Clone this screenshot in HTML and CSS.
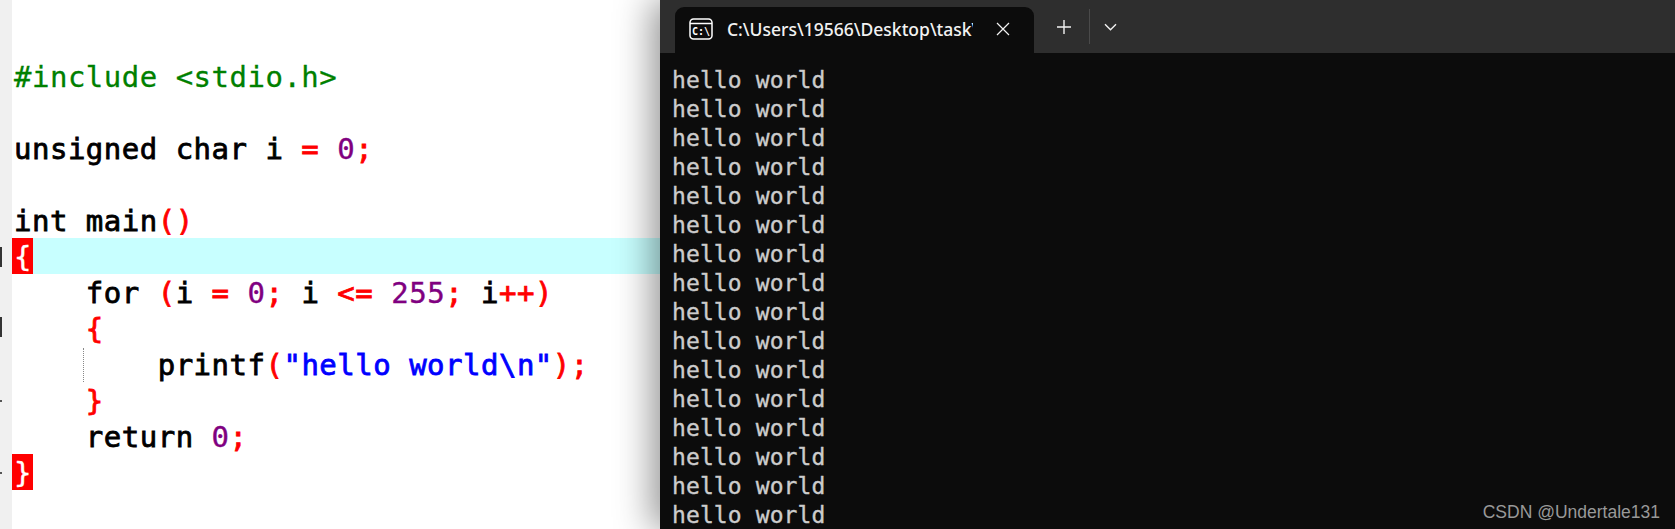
FILE: index.html
```html
<!DOCTYPE html>
<html lang="en">
<head>
<meta charset="utf-8">
<title>hello world</title>
<link rel="stylesheet" href="styles.css">
</head>
<body>
<div class="page">
  <section class="editor">
    <div class="gutter">
      <i class="mark m1"></i><i class="mark m2"></i><i class="tick t1"></i><i class="tick t2"></i>
    </div>
    <div class="code">
      <div class="line pre">#include &lt;stdio.h&gt;</div>
      <div class="line"></div>
      <div class="line"><span class="k">unsigned char i </span><span class="o">=</span> <span class="n">0</span><span class="o">;</span></div>
      <div class="line"></div>
      <div class="line"><span class="k">int main</span><span class="o">()</span></div>
      <div class="line hl"><span class="match">{</span></div>
      <div class="line">    <span class="k">for </span><span class="o">(</span><span class="k">i </span><span class="o">=</span> <span class="n">0</span><span class="o">;</span><span class="k"> i </span><span class="o">&lt;=</span> <span class="n">255</span><span class="o">;</span><span class="k"> i</span><span class="o">++)</span></div>
      <div class="line">    <span class="o">{</span></div>
      <div class="line guide">        <span class="k">printf</span><span class="o">(</span><span class="s">"hello world\n"</span><span class="o">);</span></div>
      <div class="line">    <span class="o">}</span></div>
      <div class="line">    <span class="k">return </span><span class="n">0</span><span class="o">;</span></div>
      <div class="line"><span class="match">}</span></div>
    </div>
  </section>
  <section class="terminal">
    <header class="tabbar">
      <div class="tab">
        <svg class="tab-icon" width="24" height="22" viewBox="0 0 24 22" fill="none" stroke="#fff" stroke-width="1.5"><rect x="1" y="1" width="22" height="20" rx="3.5"/><path d="M1 5.500h22"/><text class="icon-text" x="12" y="16.500" text-anchor="middle">C:\</text></svg>
        <span class="tab-title">C:\Users\19566\Desktop\task\</span>
        <svg class="tab-close" width="14" height="14" viewBox="0 0 14 14" stroke="#f2f2f2" stroke-width="1.2"><path d="M1 1l12 12M13 1L1 13"/></svg>
      </div>
      <svg class="plus" width="16" height="16" viewBox="0 0 16 16" stroke="#f2f2f2" stroke-width="1.4"><path d="M8 1v14M1 8h14"/></svg>
      <span class="divider"></span>
      <svg class="chevron" width="13" height="8" viewBox="0 0 13 8" fill="none" stroke="#f2f2f2" stroke-width="1.4"><path d="M1 1.200l5.500 5.500 5.500-5.500"/></svg>
    </header>
    <div class="output">
      <div>hello world</div><div>hello world</div><div>hello world</div><div>hello world</div>
      <div>hello world</div><div>hello world</div><div>hello world</div><div>hello world</div>
      <div>hello world</div><div>hello world</div><div>hello world</div><div>hello world</div>
      <div>hello world</div><div>hello world</div><div>hello world</div><div>hello world</div>
    </div>
    <div class="watermark">CSDN @Undertale131</div>
  </section>
</div>
</body>
</html>
```
FILE: styles.css
```css
* { box-sizing: border-box; }
html, body { margin: 0; padding: 0; background: #fff; }
.page { display: flex; width: 1675px; height: 529px; overflow: hidden; }
.editor { position: relative; display: flex; flex: 0 0 660px; background: #fff; }
.gutter { position: relative; flex: 0 0 12px; background: #f0f0f0; }
.mark { position: absolute; left: 0; width: 2px; height: 20px; background: #333; }
.m1 { top: 247px; }
.m2 { top: 317px; }
.tick { position: absolute; left: 0; width: 2px; height: 2px; background: #555; }
.t1 { top: 400px; }
.t2 { top: 472px; }
.code {
  flex: 1;
  padding-top: 58px;
  font-family: "DejaVu Sans Mono", monospace;
  font-size: 29px;
  letter-spacing: 0.5px;
  color: #000;
  overflow: hidden;
}
.line { position: relative; height: 36px; padding-left: 2px; line-height: 38px; white-space: pre; }
.k { -webkit-text-stroke: 0.8px #000; }
.o { color: #f00; -webkit-text-stroke: 0.8px #f00; }
.n { color: #800080; -webkit-text-stroke: 0.4px #800080; }
.s { color: #00f; -webkit-text-stroke: 0.8px #00f; }
.pre { color: #008000; -webkit-text-stroke: 0.3px #008000; }
.hl { background: #c8ffff; }
.match { display: inline-block; width: 21px; height: 36px; margin-left: -2px; padding-left: 2px; background: #f00; color: #fff; -webkit-text-stroke: 0.3px #fff; }
.guide::before { content: ""; position: absolute; left: 71px; top: 2px; height: 34px; border-left: 1px dotted #888; }
.terminal {
  position: relative;
  flex: 1;
  display: flex;
  flex-direction: column;
  background: #0c0c0c;
  box-shadow: -8px 0 34px rgba(0, 0, 0, 0.42);
}
.tabbar { display: flex; align-items: center; flex: 0 0 53px; padding-left: 15px; background: #2e2e2e; }
.tab {
  display: flex;
  align-items: center;
  align-self: flex-end;
  width: 359px;
  height: 46px;
  padding: 0 0 2px 14px;
  background: #0c0c0c;
  border-radius: 9px 9px 0 0;
}
.tab-icon { flex: none; }
.icon-text { fill: #fff; stroke: none; font-family: "DejaVu Sans Mono", monospace; font-size: 10px; font-weight: 700; }
.tab-title {
  width: 246px;
  margin-left: 14px;
  overflow: hidden;
  white-space: nowrap;
  color: #f2f2f2;
  font-family: "Noto Sans", sans-serif;
  font-size: 17.500px;
  font-weight: 500;
}
.tab-close { flex: none; margin-left: 23px; }
.plus { margin-left: 22px; }
.divider { width: 1px; height: 35px; margin-left: 17px; background: #4a4a4a; }
.chevron { margin-left: 14px; }
.output {
  flex: 1;
  padding: 13px 0 0 12px;
  overflow: hidden;
  font-family: "DejaVu Sans Mono", monospace;
  font-size: 23px;
  letter-spacing: 0.1px;
  line-height: 29px;
  color: #cccccc;
  -webkit-text-stroke: 0.35px #cccccc;
}
.watermark {
  position: absolute;
  right: 15px;
  bottom: 6px;
  color: #999;
  font-family: "Liberation Sans", sans-serif;
  font-size: 17.500px;
  line-height: 22px;
}
```
